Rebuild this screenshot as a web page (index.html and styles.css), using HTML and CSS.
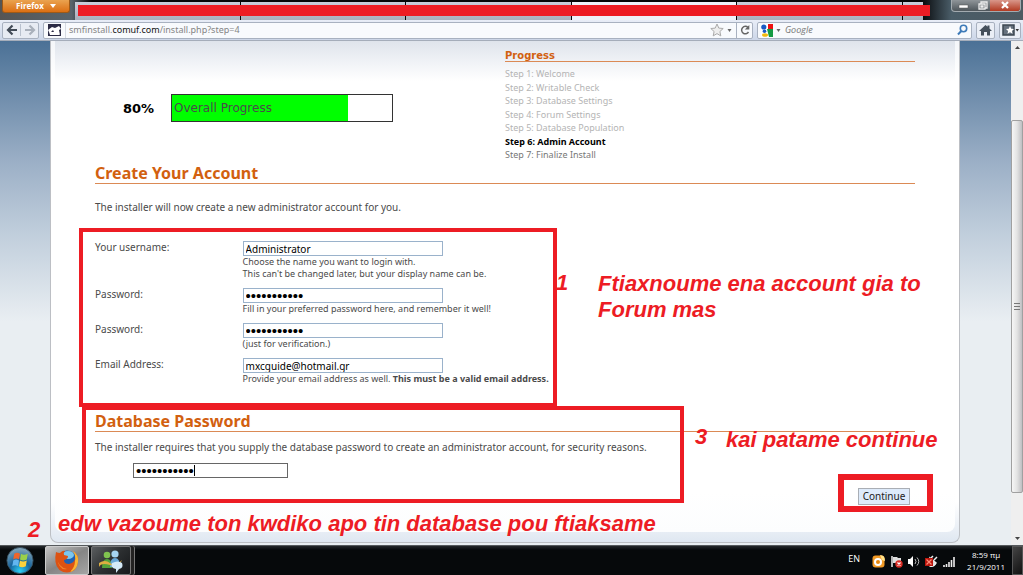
FILE: index.html
```html
<!DOCTYPE html>
<html lang="en">
<head>
<meta charset="utf-8">
<title>SMF Installer</title>
<link rel="stylesheet" href="styles.css">
</head>
<body>
<div class="desktop">
  <header class="titlebar">
    <button class="firefox-menu" type="button">Firefox <span class="caret-down"></span></button>
    <div class="tabs">
      <button class="tab" type="button" aria-label="Tab 1"></button>
      <button class="tab" type="button" aria-label="Tab 2"></button>
      <button class="tab" type="button" aria-label="Tab 3"></button>
      <button class="tab tab-active" type="button" aria-label="Tab 4"></button>
      <button class="tab" type="button" aria-label="Tab 5"></button>
      <button class="tab tab-new" type="button" aria-label="New tab"></button>
      <span class="redaction"></span>
    </div>
    <div class="window-controls">
      <button type="button" aria-label="Minimize"><svg width="24" height="12" viewBox="0 0 24 12"><rect x="7" y="5" width="9" height="3" fill="#fff" stroke="#555" stroke-width=".5"/></svg></button>
      <button type="button" aria-label="Restore"><svg width="14" height="12" viewBox="0 0 14 12"><path d="M5 4V2h6v6H9M3 4h6v5H3zM5 6h2v1H5z" fill="none" stroke="#eee" stroke-width="1.3"/></svg></button>
      <button class="close" type="button" aria-label="Close"><svg width="30" height="12" viewBox="0 0 30 12"><path d="M12 2l6 6M18 2l-6 6" stroke="#fff" stroke-width="2.2"/></svg></button>
    </div>
  </header>

  <nav class="navbar">
    <div class="history">
      <button type="button" aria-label="Back"><svg width="12" height="12" viewBox="0 0 12 12"><path d="M6.500 1.500L2 6l4.500 4.500M2 6h9" fill="none" stroke="#424b57" stroke-width="2.200"/></svg></button>
      <button type="button" aria-label="Forward"><svg width="12" height="12" viewBox="0 0 12 12"><path d="M5.500 1.500L10 6l-4.500 4.500M10 6H1" fill="none" stroke="#a9b0bb" stroke-width="2.200"/></svg></button>
    </div>
    <div class="address">
      <span class="site-icon"><svg width="13" height="12" viewBox="0 0 13 12"><rect width="13" height="12" fill="#2b2b45"/><path d="M0 6l4-3 3 1 4-2 2 3-2 1 1 5H2l-1-3z" fill="#fff"/><path d="M3 8l2-2 1 2zM0 12V9l2 3zM13 12V8l-2 4z" fill="#2b2b45"/></svg></span>
      <span class="url">smfinstall.<span class="domain">comuf.com</span>/install.php?step=4</span>
      <button class="star" type="button" aria-label="Bookmark"><svg width="22" height="14" viewBox="0 0 22 14"><path d="M7 1l1.800 4.100 4.400.4-3.300 3 .9 4.400L7 10.600l-3.800 2.300.9-4.400-3.300-3 4.400-.4z" fill="#eee" stroke="#aaa"/><path d="M17.500 6h4l-2 3z" fill="#666"/></svg></button>
      <button class="reload" type="button" aria-label="Reload"><svg width="12" height="12" viewBox="0 0 12 12"><path d="M9 3.500A3.700 3.700 0 1 0 9.500 8" fill="none" stroke="#666" stroke-width="1.500"/><path d="M10.300 1v4.500H5.800z" fill="#666"/></svg></button>
    </div>
    <div class="search">
      <svg width="20" height="13" viewBox="0 0 20 13"><rect width="12" height="13" fill="#fff"/><path d="M7 0h5v5H7z" fill="#e11"/><path d="M6 5h6v8H8z" fill="#139a43"/><circle cx="2.800" cy="3" r="2.600" fill="#1a5bc4"/><circle cx="3.500" cy="7.200" r="1.800" fill="#1a5bc4"/><ellipse cx="4" cy="11" rx="3" ry="1.800" fill="#f2b90c"/><path d="M15.500 5h4l-2 3z" fill="#666"/></svg>
      <input type="text" aria-label="Search Google" placeholder="Google">
      <svg width="11" height="12" viewBox="0 0 11 12"><circle cx="6.500" cy="4.500" r="3.200" fill="none" stroke="#3d7ab8" stroke-width="1.600"/><path d="M4.300 7L1 10.500" stroke="#3d7ab8" stroke-width="2"/></svg>
    </div>
    <button class="tool" type="button" aria-label="Home"><svg width="13" height="12" viewBox="0 0 13 12"><path d="M6.500 1L0 7h2v4.500h3V8h3v3.500h3V7h2L10.500 4.500V1.500h-2v1.300z" fill="#45505c"/></svg></button>
    <button class="tool tool-wide" type="button" aria-label="Bookmarks"><svg width="17" height="12" viewBox="0 0 17 12"><path d="M1 1h11v10H1z" fill="#66717e" stroke="#3d4752" stroke-width="1.500"/><path d="M8 2l1.200 2.700 2.800.3-2.100 1.900.6 2.900L8 8.300 5.500 9.800l.6-2.900L4 5l2.800-.3z" fill="#fff"/><path d="M13.500 5H17l-1.700 2.500z" fill="#333"/></svg></button>
  </nav>

  <div class="viewport">
    <div class="page">
      <main class="card">
        <div class="panel">
          <section class="overview">
            <div class="overall">
              <span class="percent">80%</span>
              <div class="meter"><div class="meter-fill" style="width: 80%">Overall Progress</div></div>
            </div>
            <div class="steps">
              <h2>Progress</h2>
              <ol>
                <li>Step 1: Welcome</li>
                <li>Step 2: Writable Check</li>
                <li>Step 3: Database Settings</li>
                <li>Step 4: Forum Settings</li>
                <li>Step 5: Database Population</li>
                <li class="current">Step 6: Admin Account</li>
                <li class="waiting">Step 7: Finalize Install</li>
              </ol>
            </div>
          </section>

          <form>
            <h1>Create Your Account</h1>
            <p class="intro">The installer will now create a new administrator account for you.</p>
            <div class="fields">
              <label for="username">Your username:</label>
              <div><input id="username" type="text" value="Administrator"><small>Choose the name you want to login with.<br>This can't be changed later, but your display name can be.</small></div>
              <label for="password1">Password:</label>
              <div><input id="password1" type="password" value="abcdefghijk"><small>Fill in your preferred password here, and remember it well!</small></div>
              <label for="password2">Password:</label>
              <div><input id="password2" type="password" value="abcdefghijk"><small>(just for verification.)</small></div>
              <label for="email">Email Address:</label>
              <div><input id="email" type="text" value="mxcguide@hotmail.gr"><small>Provide your email address as well. <b>This must be a valid email address.</b></small></div>
            </div>
            <h1>Database Password</h1>
            <label class="db-label" for="dbpass">The installer requires that you supply the database password to create an administrator account, for security reasons.</label>
            <div class="db-field"><input id="dbpass" type="password" value="abcdefghijk"><span class="text-cursor"></span></div>
            <div class="actions"><button type="button">Continue</button></div>
          </form>
        </div>
      </main>
      <div class="mark mark-account"></div>
      <div class="mark mark-database"></div>
      <div class="mark mark-continue"></div>
      <p class="note note-one">1</p>
      <p class="note note-account">Ftiaxnoume ena account gia to<br>Forum mas</p>
      <p class="note note-three">3</p>
      <p class="note note-continue">kai patame continue</p>
      <p class="note note-two">2</p>
      <p class="note note-database">edw vazoume ton kwdiko apo tin database pou ftiaksame</p>
    </div>
    <div class="scrollbar">
      <svg width="12" height="14" viewBox="0 0 12 14"><path d="M4 8h5L6.500 5z" fill="#444"/></svg>
      <div class="thumb"><span></span></div>
      <svg width="12" height="14" viewBox="0 0 12 14"><path d="M4 6h5L6.500 9z" fill="#444"/></svg>
    </div>
  </div>

  <footer class="taskbar">
    <button class="start" type="button" aria-label="Start"><svg width="30" height="30" viewBox="0 0 30 30"><defs><radialGradient id="orb" cx=".5" cy=".9" r=".9"><stop offset="0" stop-color="#2cd0f5"/><stop offset=".45" stop-color="#17659e"/><stop offset="1" stop-color="#8ba9ba"/></radialGradient></defs><circle cx="15" cy="15" r="13.500" fill="url(#orb)" stroke="#36505f"/><path d="M9 8q3-2 6 0l-1 6q-3-2-6 0z" fill="#f0652a"/><path d="M16 8q3 2 7 0l-1 6q-4 2-7 0z" fill="#9bd04a"/><path d="M8 15q3-2 6 0l-1 6q-3-2-6 0z" fill="#62b6f0"/><path d="M15 15q3 2 7 0l-1 6q-4 2-7 0z" fill="#fdd13c"/></svg></button>
    <button class="task task-active" type="button" aria-label="Firefox"><svg width="26" height="26" viewBox="0 0 26 26"><circle cx="13" cy="12.500" r="10" fill="#1f62b4"/><ellipse cx="14" cy="7" rx="6" ry="4" fill="#7cc6ee"/><path d="M2 4q2 1 4 1 3-3 5-2-2 2-1 4l4 1q0 3-4 4 0 4 5 4 5-1 6-5 1-5-2-8 6 4 5 11-1 10-11 10.500Q3 24 1.500 14 1 8 2 4z" fill="#dc5213"/><path d="M19 3q6 4 5 11-1 8-8 10 5-5 5-11 1-5-2-10z" fill="#f9b432"/><path d="M3 10q1 9 10 11-8 2-10-11z" fill="#f3842b"/></svg></button>
    <button class="task task-stack" type="button" aria-label="Messenger"><svg width="26" height="26" viewBox="0 0 26 26"><circle cx="9" cy="7" r="3.300" fill="#80c34f"/><path d="M4 20q0-9 5-9t5 9z" fill="#52a33a"/><circle cx="17" cy="6" r="3.600" fill="#a6d4f1"/><path d="M12 19q0-9 5-9t5 9z" fill="#69a8d8"/><path d="M1 15q6-4 11 0t12-3q-3 8-12 5t-11 2z" fill="#dcae42"/><path d="M14 15q6-3 10 0 2 5-3 6l-3 4v-4q-6-1-4-6z" fill="#d4eaf8"/></svg></button>
    <div class="tray">
      <span class="lang">EN</span>
      <svg width="13" height="13" viewBox="0 0 13 13"><rect width="12" height="12" x=".5" y=".5" rx="3" fill="#f19a26"/><circle cx="6" cy="7" r="4" fill="#fff"/><circle cx="6" cy="7" r="2" fill="#e8870c"/><path d="M8 0q5 0 5 6l-3-1z" fill="#ffe189"/></svg>
      <svg width="13" height="13" viewBox="0 0 13 13"><path d="M2 1v11" stroke="#eee" stroke-width="1.500"/><path d="M3 2h4l1 1h3v5H3z" fill="#ddd"/><circle cx="9" cy="9" r="3.700" fill="#db2c24"/><path d="M7.500 7.500l3 3m0-3l-3 3" stroke="#fff" stroke-width="1.200"/></svg>
      <svg width="12" height="13" viewBox="0 0 12 13"><path d="M0 4h2l3-3v11L2 9H0z" fill="#fff"/><path d="M7 4q2 2.500 0 5M9 2.500q3.500 4 0 8" fill="none" stroke="#bbb"/></svg>
      <svg width="13" height="13" viewBox="0 0 13 13"><path d="M6 3l2-2M9 5l3-3M5 3l6 5q-2 4-6 3z" stroke="#eee" stroke-width="1.500" fill="#ddd"/><rect y="3" width="8" height="8" fill="#b9150c"/><path d="M1.500 4.500l5 5m0-5l-5 5" stroke="#ff8b78" stroke-width="1.200"/></svg>
      <svg width="12" height="13" viewBox="0 0 12 13"><path d="M1 10v2M3.500 9v3M6 7v5M8.500 5v7M11 2v10" stroke="#eee" stroke-width="1.600"/></svg>
      <div class="clock"><span>8:59 πμ</span><span>21/9/2011</span></div>
      <button class="show-desktop" type="button" aria-label="Show desktop"></button>
    </div>
  </footer>
</div>
</body>
</html>
```
FILE: styles.css
```css
* { box-sizing: border-box; }

body {
  margin: 0;
  background: #e9eef2;
  font-family: "Noto Sans", Verdana, sans-serif;
  font-size: 10px;
  color: #4a4a4a;
}

h1, h2, p, ol { margin: 0; padding: 0; }
button { padding: 0; border: 0; background: none; font: inherit; color: inherit; }
svg { display: block; flex: none; }

.desktop { display: flex; flex-direction: column; min-height: 100vh; }

/* Title bar */
.titlebar {
  display: flex;
  height: 20px;
  padding-left: 2px;
  background: linear-gradient(90deg, #555, #59646c 7%, #050608 9%, #050608 90%, #4a5d68 93%, #4d5a61);
}
.firefox-menu {
  display: flex;
  align-items: center;
  justify-content: center;
  gap: 6px;
  width: 68px;
  height: 13px;
  border: 1px solid #a05a16;
  border-top: 0;
  border-radius: 0 0 3px 3px;
  background: linear-gradient(#eaa350, #dc6f13);
  color: #fff;
  font: bold 8px/12px "Open Sans", sans-serif;
}
.caret-down { border: 3px solid transparent; border-top: 4px solid #fff; border-bottom: 0; }
.tabs { position: relative; display: flex; flex: 1; gap: 1px; margin: 2px 28px 0 5px; }
.tab { flex: 165; background: linear-gradient(#c9cedb, #a9afbb); }
.tab-active { background: #eef2fa; }
.tab-new { flex: 20; }
.redaction { position: absolute; top: 3px; left: 3px; right: -7px; height: 11px; background: #ed1c24; }
.window-controls {
  display: flex;
  width: 70px;
  height: 12px;
  margin-right: 2px;
  border: 1px solid #a3abb0;
  border-top: 0;
  border-radius: 0 0 4px 4px;
  overflow: hidden;
  background: linear-gradient(#8f9599, #4e565b);
}
.window-controls .close { flex: 1; background: linear-gradient(#d9978a, #b23a22); }

/* Navigation bar */
.navbar {
  display: flex;
  align-items: center;
  gap: 4px;
  height: 21px;
  padding: 0 2px;
  border-bottom: 1px solid #a5adba;
  background: linear-gradient(#e8edf7, #ccd6e8);
}
.history, .address, .search, .tool {
  display: flex;
  align-items: center;
  height: 17px;
  border: 1px solid #a8b1c0;
  border-radius: 2px;
}
.history { width: 37px; background: #e7ebf3; }
.history button { display: flex; flex: 1; justify-content: center; }
.history button + button { border-left: 1px solid #b9c1ce; }
.address { flex: 1; background: #f8fafd; }
.site-icon { display: flex; align-items: center; height: 100%; padding: 0 4px; border-right: 1px solid #d5dae2; }
.url { flex: 1; padding-left: 3px; font: 9px/14px "Noto Sans", sans-serif; color: #858585; }
.domain { color: #111; }
.reload { display: flex; align-items: center; justify-content: center; width: 16px; height: 100%; margin-left: 4px; border-left: 1px solid #a8b1c0; }
.search { gap: 4px; width: 215px; padding: 0 3px; background: #f8fafd; }
.search input { flex: 1; min-width: 0; padding: 0; border: 0; outline: 0; background: none; font: italic 9px/14px "Open Sans", sans-serif; }
.search input::placeholder { color: #777; opacity: 1; }
.tool { justify-content: center; width: 19px; background: #eaeef6; }
.tool-wide { width: 22px; }

/* Page */
.viewport { display: flex; flex: 1; }
.page {
  position: relative;
  flex: 1;
  padding-bottom: 2px;
  background: linear-gradient(#4b7196, #9bafc6 120px, #bfcddb 190px, #e9eef2 280px);
}
.card {
  margin: 0 51px 0 50px;
  padding: 0 4px 10px;
  border: 1px solid #bcbfc4;
  border-top: 0;
  border-radius: 0 0 8px 8px;
  background: linear-gradient(#f4f6f9, #fff 35px, #fff calc(100% - 40px), #dfe7f1);
}
.panel {
  padding: 6px 40px 27px;
  border-radius: 0 0 8px 8px;
  background: linear-gradient(#dfe4ec, #fff 40px, #fff calc(100% - 40px), #fcfdfe);
}
.overview { display: grid; grid-template-columns: 1fr 1fr; height: 116px; }
.overall { display: flex; align-items: flex-start; gap: 16px; padding: 47px 0 0 28px; font-family: "DejaVu Sans", Verdana, sans-serif; }
.percent { width: 32px; color: #000; font-size: 13px; font-weight: bold; line-height: 30px; }
.meter { width: 222px; height: 28px; border: 1px solid #333; }
.meter-fill { height: 100%; padding-left: 2px; background: #0f0; font-size: 12px; line-height: 26px; white-space: nowrap; }
.steps h2 { height: 15px; padding-top: 2px; border-bottom: 1px solid #db8a55; color: #d2600f; font: bold 10px/14px "DejaVu Sans", Verdana, sans-serif; }
.steps ol { margin-top: 5px; list-style: none; color: #b4b4b4; font-size: 9px; line-height: 1.5; }
.steps .current { color: #000; font-weight: bold; }
.steps .waiting { color: #777; }

h1 { border-bottom: 1px solid #db8a55; color: #d2600f; font-size: 16px; line-height: 20px; }
.intro { margin-top: 16px; line-height: 14px; }
.fields { display: grid; grid-template-columns: 18% 1fr; row-gap: 8px; margin: 27px 0 26px; }
.fields label { line-height: 12px; }
.fields small { display: block; font-size: 9px; line-height: 12px; }
.fields input, .db-field input {
  display: block;
  width: 200px;
  height: 15px;
  padding: 0 2px;
  border: 1px solid #9ab2cb;
  background: #fff;
  color: #000;
  font: 10px/13px "Noto Sans", Verdana, sans-serif;
}
.fields input[type="password"], .db-field input { font: 15px/13px "Liberation Sans", Arial, sans-serif; }
.db-label { display: block; margin-top: 8px; line-height: 14px; }
.db-field { position: relative; margin: 9px 0 0 38px; }
.db-field input { width: 155px; border-color: #666; }
.text-cursor { position: absolute; top: 2px; left: 61px; width: 1px; height: 11px; background: #000; }
.actions { display: flex; justify-content: flex-end; padding: 10px 5px 0; }
.actions button { width: 52px; height: 17px; border: 1px solid #a9aeb5; background: #deebfb; color: #222; line-height: 15px; }

/* Annotations drawn over the page */
.mark { position: absolute; border: 4px solid #ed1c24; }
.mark-account { left: 79px; top: 187px; width: 478px; height: 179px; }
.mark-database { left: 82px; top: 365px; width: 602px; height: 97px; }
.mark-continue { left: 838px; top: 433px; width: 95px; height: 38px; border-width: 6px; }
.note { position: absolute; color: #ed1c24; font: italic bold 22px/26px "Liberation Sans", Arial, sans-serif; white-space: nowrap; }
.note-one { left: 556px; top: 229px; }
.note-account { left: 598px; top: 230px; }
.note-three { left: 695px; top: 383px; }
.note-continue { left: 726px; top: 386px; }
.note-two { left: 28px; top: 476px; }
.note-database { left: 58px; top: 470px; }

/* Scrollbar */
.scrollbar { display: flex; flex-direction: column; width: 12px; background: #efefef; }
.thumb {
  display: flex;
  align-items: center;
  justify-content: center;
  flex: 1;
  margin: 65px 0 38px;
  border: 1px solid #a0a0a0;
  border-radius: 2px;
  background: linear-gradient(90deg, #f6f6f6, #e3e3e3 50%, #bfbfc2);
}
.thumb span { width: 6px; height: 7px; background: repeating-linear-gradient(#777 0 1px, transparent 1px 3px); }

/* Taskbar */
.taskbar { display: flex; height: 30px; border-top: 1px solid #55595c; background: linear-gradient(#24282b, #06090b 4px); }
.start { width: 30px; margin: 0 10px 0 5px; }
.start svg { height: 29px; }
.task {
  display: flex;
  align-items: center;
  justify-content: center;
  width: 44px;
  height: 29px;
  margin-right: 2px;
  border: 1px solid #777;
  border-radius: 2px;
  background: linear-gradient(135deg, #5a5d5f, #2c2f31 50%, #17191b);
}
.task-active { border-color: #ccc; background: linear-gradient(150deg, #c4c4c4, #858585 50%, #a5a5a5); }
.task-stack { width: 40px; box-shadow: 3px 0 #222, 4px 0 #777; }
.tray { display: flex; align-items: center; gap: 5px; margin-left: auto; color: #fff; font: 9px/12px "Open Sans", sans-serif; }
.lang { align-self: flex-start; margin-right: 7px; line-height: 26px; }
.tray svg { margin-top: 2px; }
.clock { display: flex; flex-direction: column; align-items: center; margin: 0 2px 0 7px; font-size: 8px; }
.show-desktop { width: 11px; height: 29px; border: 1px solid #555; background: linear-gradient(135deg, #444, #111); }
```
